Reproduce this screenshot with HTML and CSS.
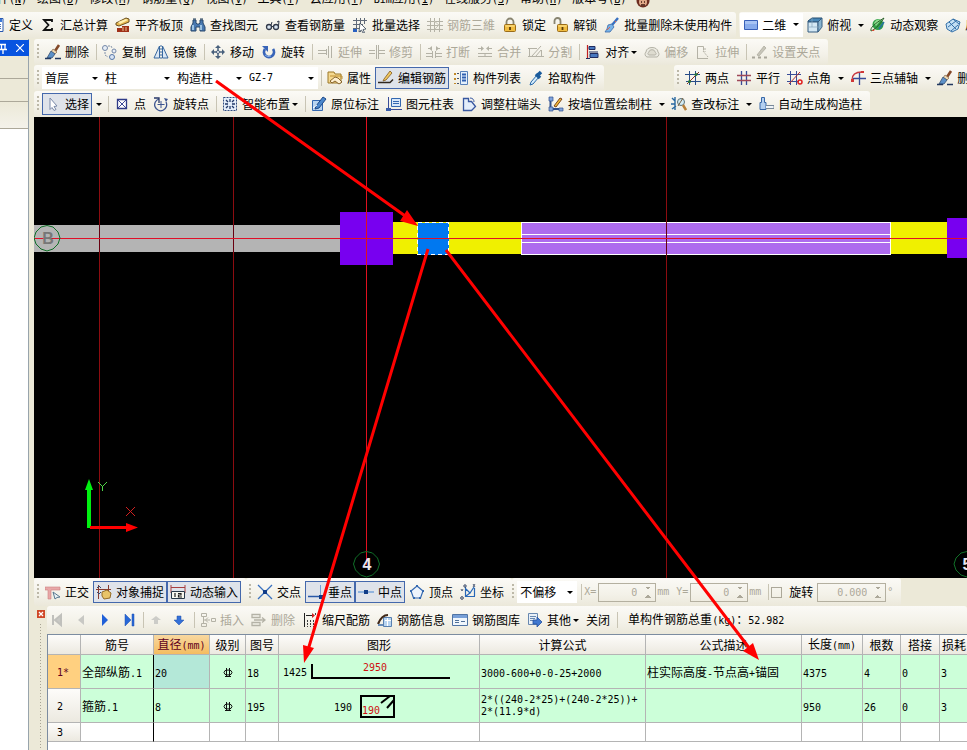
FILE: index.html
```html
<!DOCTYPE html>
<html lang="zh-CN">
<head>
<meta charset="utf-8">
<title>钢筋</title>
<link rel="stylesheet" href="styles.css">
</head>
<body>
<svg class="defs" aria-hidden="true">
<defs>
<symbol id="define" viewBox="0 0 16 16"><path d="M1 1.500h13v13H1z" fill="#fff" stroke="#2858b0"/><path d="M2 2h11v3H2z" fill="#3c78d8"/><path d="M4 7.500h8M4 9.500h8M4 11.500h8" stroke="#4870b8"/></symbol>
<symbol id="sigma" viewBox="0 0 16 16"><path d="M12 5V3H4l4.500 5L4 13h8v-2" fill="none" stroke="#111" stroke-width="1.800"/></symbol>
<symbol id="slab" viewBox="0 0 16 16"><path d="M1 6l10-5 3 1v3L4 9 1 8z" fill="#e8b850" stroke="#6a5020"/><path d="M3 5l8-3 2 1-8 4z" fill="#fff0b0"/><path d="M2 11h5v4H2zM7 9h7v6H7z" fill="#a03018"/><path d="M8 10v4M11 10v4" stroke="#e8c090"/></symbol>
<symbol id="binoc" viewBox="0 0 16 16"><path d="M3 3h3v3l1 1h2l1-1V3h3v3l2 4v4h-5v-4H6v4H1v-4l2-4z" fill="#4878b0" stroke="#28486c"/><path d="M3 8v5M11 8v5" stroke="#b8dcf4" stroke-width="1.500"/><path d="M3 2h3M10 2h3" stroke="#1c3854"/></symbol>
<symbol id="glasses" viewBox="0 0 16 16"><circle cx="4" cy="10" r="2.500" fill="#d8e4f0" stroke="#303848" stroke-width="1.300"/><circle cx="11" cy="10" r="2.500" fill="#d8e4f0" stroke="#303848" stroke-width="1.300"/><path d="M6.500 9.500h2M13.500 9L14 4l-2 1M6 8l1-3" fill="none" stroke="#303848"/></symbol>
<symbol id="batch" viewBox="0 0 16 16"><path d="M4.500 1v14M8.500 1v14M12.500 1v6M1 3.500h14M1 7.500h10M1 11.500h8" stroke="#606a78"/><path d="M8 6l6 6-3 .500 1.500 3-1.500.500-1.500-3L7 15z" fill="#fff" stroke="#384858" stroke-width=".8"/><path d="M1 12h4v3H1z" fill="#2860c0"/></symbol>
<symbol id="grid3" viewBox="0 0 16 16"><path d="M3.500 1v14M7.500 1v14M12.500 1v14M0 4.500h16M0 8.500h16M0 12.500h16" stroke="#b4b2a6"/><path d="M7 4l5 4-4 4" fill="none" stroke="#c8c6ba"/></symbol>
<symbol id="lock" viewBox="0 0 16 16"><path d="M4.500 8V5a3.500 3.500 0 017 0v3" fill="none" stroke="#888470" stroke-width="1.800"/><rect x="2.500" y="7.500" width="11" height="7" rx="1" fill="#f0bc40" stroke="#9a6c18"/><path d="M3.500 9h9" stroke="#ffe898"/><path d="M8 10v3" stroke="#5a3c08" stroke-width="1.800"/></symbol>
<symbol id="unlock" viewBox="0 0 16 16"><path d="M1.500 7V4a3 3 0 016 0v4" fill="none" stroke="#888470" stroke-width="1.800"/><rect x="4.500" y="7.500" width="10" height="7" rx="1" fill="#f0bc40" stroke="#9a6c18"/><path d="M5.500 9h8" stroke="#ffe898"/><path d="M9.500 10v3" stroke="#5a3c08" stroke-width="1.800"/></symbol>
<symbol id="brushb" viewBox="0 0 16 16"><path d="M14 1l-6 7" stroke="#3870c0" stroke-width="2.400"/><path d="M4 8l4-1 2 3-4 5H1l2-3z" fill="#78b4e8" stroke="#3868a8" stroke-width=".8"/><path d="M3 13l3-3M11 4l1 1" stroke="#e86048"/></symbol>
<symbol id="brush" viewBox="0 0 16 16"><path d="M14 1l-4 6" stroke="#844828" stroke-width="2.600"/><path d="M8 5l4 3-2 2-4-2z" fill="#f0d8b0" stroke="#806850" stroke-width=".7"/><path d="M6 7l4 3-3 4H2z" fill="#5c90c8" stroke="#385070" stroke-width=".8"/><path d="M0 14.500h6M10 14.500h6" stroke="#223860" stroke-width="1.300"/></symbol>
<symbol id="rect2d" viewBox="0 0 16 16"><path d="M1.500 3.500h13v9h-13z" fill="#88acec" stroke="#3860b8"/><path d="M2 4h12v3H2z" fill="#a8c4f4"/></symbol>
<symbol id="cube" viewBox="0 0 16 16"><path d="M1 4l4-3h10l-4 4H1z" fill="#4888b8" stroke="#244c70"/><path d="M1 5h10v10H1z" fill="#d4e8f4" stroke="#345c80"/><path d="M11 5l4-4v9l-4 5z" fill="#88b4d0" stroke="#345c80"/><path d="M5 1v9H1M5 10h10" fill="none" stroke="#88a8bc" stroke-width=".7"/></symbol>
<symbol id="orbit" viewBox="0 0 16 16"><circle cx="8" cy="7.500" r="5.500" fill="#30a048"/><path d="M4 6c2-4 5-4 7-3L6 9z" fill="#90dc90"/><path d="M1 14c-1-3 3-7 13-13-3 5-8 11-13 13z" fill="none" stroke="#286028"/><path d="M1 14l4-2-1 2z" fill="#e04830"/><path d="M9 12l5-7" stroke="#2870a0" stroke-width="1.500"/></symbol>
<symbol id="globe" viewBox="0 0 16 16"><path d="M1 7l7-5 7 3-2 7-6 3-5-3z" fill="#c4e0f4" stroke="#3470a8"/><path d="M3 10l8-6M6 14l7-6M4 5l7 7M8 2l6 5" stroke="#3470a8"/></symbol>
<symbol id="copy" viewBox="0 0 16 16"><circle cx="3" cy="4" r="2.500" fill="#e8eef6" stroke="#7488a8"/><circle cx="12" cy="7" r="2" fill="#e8eef6" stroke="#7488a8"/><circle cx="10" cy="13" r="2.500" fill="#d8e4f4" stroke="#5878a8"/><path d="M6 2h3l1 2M3 8v3l3 2" fill="none" stroke="#8090a8" stroke-dasharray="2 1"/></symbol>
<symbol id="mirror" viewBox="0 0 16 16"><path d="M6.500 2v12H1zM9.500 2v12H15z" fill="#dce8f4" stroke="#3868a0"/><path d="M8 1v14" stroke="#3868a0" stroke-dasharray="2 1"/></symbol>
<symbol id="move" viewBox="0 0 16 16"><path d="M8 2v12M2 8h12" stroke="#48607c" stroke-width="1.500"/><path d="M5 4l3-3 3 3zM5 12l3 3 3-3zM4 5L1 8l3 3zM12 5l3 3-3 3z" fill="#48607c"/><circle cx="8" cy="8" r="1.500" fill="#fff" stroke="#48607c"/></symbol>
<symbol id="rotate" viewBox="0 0 16 16"><path d="M4 5a5 5 0 108 0" fill="none" stroke="#3864b8" stroke-width="2.800"/><path d="M1 2h6v6z" fill="#3864b8"/><path d="M4 11a5 5 0 006 1" fill="none" stroke="#88b0e8"/></symbol>
<symbol id="extend" viewBox="0 0 16 16"><path d="M0 6.500h8M0 9.500h8M10.500 2v12M13.500 2v12M8.500 5v6" stroke="#b4b2a6"/></symbol>
<symbol id="trim" viewBox="0 0 16 16"><path d="M0 6.500h6M0 9.500h6M10 6.500h6M10 9.500h6M7.500 1v14M9.500 1v14" stroke="#b4b2a6"/></symbol>
<symbol id="break" viewBox="0 0 16 16"><path d="M0 9.500h6M0 12.500h6M10 9.500h6M10 12.500h6M6.500 7v7M9.500 7v7M2 4.500h4M10 4.500h4" stroke="#b4b2a6"/><path d="M6 2l-3 2.500L6 7zM10 2l3 2.500L10 7z" fill="#b4b2a6"/></symbol>
<symbol id="merge" viewBox="0 0 16 16"><path d="M1 9.500h14M1 12.500h14M8 9v4M1 4.500h5M10 4.500h5" stroke="#b4b2a6"/><path d="M4 2l3 2.500L4 7zM12 2L9 4.500 12 7z" fill="#b4b2a6"/></symbol>
<symbol id="cut" viewBox="0 0 16 16"><path d="M0 4.500h9M0 12.500h16M1.500 4v8M13.500 6v7M4 12l9-10M8 12l5-6" stroke="#b4b2a6" fill="none"/></symbol>
<symbol id="align" viewBox="0 0 16 16"><path d="M2.500 1v14" stroke="#c02020" stroke-width="1.200"/><path d="M4 2.500h6v3H4zM4 8h9M5 9.500h8v4H5z" fill="#4878c0" stroke="#202c60"/><path d="M1 14.500h4" stroke="#202c60"/></symbol>
<symbol id="offset" viewBox="0 0 16 16"><path d="M3 13a3 3 0 01-1-5c0-6 12-6 12 0a3 3 0 01-1 5z" fill="#ecebe2" stroke="#b4b2a6"/><path d="M5 11c-2-1-1-2 0-3 0-3 6-3 6 0 1 1 2 2 0 3z" fill="#dedcd0" stroke="#b4b2a6"/></symbol>
<symbol id="stretch" viewBox="0 0 16 16"><path d="M2.500 14.500V2.500h6v4M2 14.500h11" fill="none" stroke="#b4b2a6"/><path d="M8 7l5 6M10 4v4" stroke="#b4b2a6" stroke-dasharray="2 1"/></symbol>
<symbol id="grip" viewBox="0 0 16 16"><path d="M5 11l7-9 2 2-7 8z" fill="#c8c6ba" stroke="#a8a69a" stroke-width=".7"/><path d="M0 13.500h3M6 13.500h3M12 13.500h3" stroke="#a8a69a" stroke-width="2"/></symbol>
<symbol id="props" viewBox="0 0 16 16"><path d="M1 2h6l1 2h6v9H1z" fill="#f4d890" stroke="#9c7828"/><path d="M3 6h12v3" fill="none" stroke="#c09030"/><path d="M3 11l5-4 3 1 4 4-3 2-4-3-3 2z" fill="#fff0d0" stroke="#7c5820" stroke-width=".9"/></symbol>
<symbol id="editbar" viewBox="0 0 16 16"><path d="M6 9l6-8 2 2-6 7-3 1z" fill="#f0c860" stroke="#805820" stroke-width=".8"/><path d="M0 12.500h12l3-3" stroke="#302820" stroke-width="1.500" fill="none"/></symbol>
<symbol id="list" viewBox="0 0 16 16"><path d="M1 3h2v2H1zM1 8h2v2H1zM1 13h2v1H1z" fill="#c08828"/><path d="M4 3.500h2M4 8.500h2M4 13.500h2" stroke="#405070"/><path d="M7.500 1.500h7v13h-7z" fill="#e4f0fc" stroke="#5880b8"/><path d="M9 4.500h4M9 7.500h4M9 10.500h4" stroke="#3060b0" stroke-width="2"/></symbol>
<symbol id="pick" viewBox="0 0 16 16"><path d="M3 12l6-7 2 2-6 7-3 1z" fill="#d4ecfc" stroke="#2868a8"/><path d="M8 4l4 4M10 5l3-3" stroke="#1c5c9c" stroke-width="3.500"/></symbol>
<symbol id="twopt" viewBox="0 0 16 16"><path d="M4.500 1v14M10.500 1v14M0 4.500h15M1 11.500h15" stroke="#284c88"/><path d="M2 14L14 2" stroke="#883020"/><circle cx="4.500" cy="11.500" r="1.500" fill="#287838"/><circle cx="11" cy="4.500" r="1.500" fill="#287838"/></symbol>
<symbol id="parallel" viewBox="0 0 16 16"><path d="M5.500 1v14M10.500 1v14" stroke="#384c98" stroke-width="1.300"/><path d="M1 5.500h14M1 10.500h14" stroke="#a04858" stroke-width="1.300"/></symbol>
<symbol id="ptangle" viewBox="0 0 16 16"><path d="M3.500 1v14M9.500 1v14M0 4.500h14M0 11.500h12" stroke="#384c98"/><path d="M2 14L13 2" stroke="#b03030"/><circle cx="13" cy="12" r="2" fill="none" stroke="#e02020" stroke-width="1.500"/></symbol>
<symbol id="threept" viewBox="0 0 16 16"><path d="M2 10c0-5 3-8 10-8" fill="none" stroke="#c83840" stroke-width="1.300"/><path d="M9.500 3v12M3 8.500h13" stroke="#384c98" stroke-width="1.300"/><path d="M1 9h3v3H1zM11 1h3v2h-3z" fill="#d03838"/></symbol>
<symbol id="cursor" viewBox="0 0 16 16"><path d="M5 2l7 8-3 .500 2 3-2 1-2-3-2 2z" fill="#fff" stroke="#7888a8"/></symbol>
<symbol id="pt" viewBox="0 0 16 16"><path d="M3.500 3.500h9v9h-9z" fill="#fff" stroke="#303c88" stroke-width="1.300"/><path d="M4 4l8 8M12 4l-8 8" stroke="#404c98"/></symbol>
<symbol id="rotpt" viewBox="0 0 16 16"><path d="M6 3a6 6 0 107 3" fill="none" stroke="#3c5490" stroke-width="1.300"/><path d="M8 5v7M4.500 8.500h7" stroke="#3c5490"/><path d="M1 2h5v5" fill="none" stroke="#283868" stroke-width="1.300"/><path d="M11 2l4 1-2 3z" fill="#3c5490"/></symbol>
<symbol id="smart" viewBox="0 0 16 16"><path d="M1.500 1.500h13v13h-13z" fill="#e4eefa" stroke="#304c80" stroke-dasharray="2 1"/><path d="M8 3v3M8 10v3M3 8h3M10 8h3M4 4l2 2M12 4l-2 2M4 12l2-2M12 12l-2-2" stroke="#203868" stroke-width="1.300"/></symbol>
<symbol id="annot" viewBox="0 0 16 16"><path d="M1.500 4.500h10v10h-10z" fill="#b8d4f0" stroke="#3468b0"/><path d="M5 10l7-9 3 2-7 9-4 1z" fill="#4c88cc" stroke="#1c4888"/><path d="M2 12l4-3" stroke="#fff"/></symbol>
<symbol id="coltable" viewBox="0 0 16 16"><path d="M2.500 1v12M0 13.500h16" stroke="#384c98"/><path d="M5.500 2.500h9v8h-9z" fill="#d8e8fa" stroke="#3468b0"/><path d="M7 5.500h6M7 7.500h6" stroke="#3468b0"/><path d="M0 12h5v3H0z" fill="#385ca8"/></symbol>
<symbol id="adjust" viewBox="0 0 16 16"><path d="M2.500 14.500V2.500h5v3h3l4 5-4 4z" fill="#e4eefa" stroke="#3858a0" stroke-width="1.300"/><path d="M9 2c3 0 4 2 4 4" fill="none" stroke="#3858a0"/></symbol>
<symbol id="wall" viewBox="0 0 16 16"><path d="M2.500 2v11h12" fill="none" stroke="#30508c" stroke-width="2"/><path d="M1 1h4v4H1zM1 11h4v4H1zM11 12h4v3h-4z" fill="#80a4dc" stroke="#30508c" stroke-width=".7"/><path d="M6 10l6-8 2 1-6 8z" fill="#f4bc38" stroke="#7c4418"/></symbol>
<symbol id="check" viewBox="0 0 16 16"><path d="M1 2l3 3M4 1v13M1 13l4-3M4 8H0" fill="none" stroke="#2868a0" stroke-width="1.400"/><circle cx="10" cy="6" r="3.500" fill="#d4ecf4" stroke="#587078"/><path d="M12 9l3 5" stroke="#b88038" stroke-width="2.500"/><path d="M7 10l5-8" stroke="#786040"/></symbol>
<symbol id="auto" viewBox="0 0 16 16"><path d="M3.500 1.500h3v5h1.500v7H2v-7h1.500z" fill="#b4d0f0" stroke="#3868a8"/><path d="M8 9.500h8v3H8" fill="#f0f4f8" stroke="#788898"/></symbol>
<symbol id="ortho" viewBox="0 0 16 16"><path d="M0 3h15v3H6v9H3V6H0z" fill="#e8a8a8" stroke="#cc8080" stroke-width=".6"/><path d="M8 8l7 5-3 .500L10 15z" fill="#e8f0f4" stroke="#587890"/></symbol>
<symbol id="snap" viewBox="0 0 16 16"><path d="M2.500 1v14M0 5.500h15M12.500 1v9" stroke="#883c30"/><path d="M1 4l2-2 2 2M1 8l2 2 2-2" fill="none" stroke="#3c4c70"/><path d="M6 8l5-2 4 3-1 5-6 1-2-3z" fill="#e8c468" stroke="#946c28"/></symbol>
<symbol id="dyn" viewBox="0 0 16 16"><path d="M1 1v8M15 1v8M1 3.500h14" stroke="#a84040"/><path d="M1.500 7.500h13v7h-13z" fill="#f8f8f0" stroke="#283848"/><path d="M5 9v4M8 9.500h3v1.500H8.500v2H12" fill="none" stroke="#202020" stroke-width="1.200"/></symbol>
<symbol id="cross" viewBox="0 0 16 16"><path d="M1 1l14 14M15 1L1 15" stroke="#3870c0" stroke-width="1.300"/><path d="M6 6h4v4H6z" fill="#103c88"/></symbol>
<symbol id="perp" viewBox="0 0 16 16"><path d="M0 12.500h16" stroke="#2858a8" stroke-width="1.500"/><path d="M12.500 1v11" stroke="#70a0d8"/><path d="M11 11h4v4h-4z" fill="#103c88"/></symbol>
<symbol id="mid" viewBox="0 0 16 16"><path d="M0 8h16" stroke="#70a0d8" stroke-width="1.400"/><path d="M6 6h4v4H6z" fill="#103c88"/></symbol>
<symbol id="vertex" viewBox="0 0 16 16"><path d="M8 2l6 5-2.500 7h-7L2 7z" fill="#eef4fc" stroke="#3468b0" stroke-width="1.200"/><path d="M7 1h2v2H7zM1 6h2v2H1zM13 6h2v2h-2zM4 13h2v2H4zM10 13h2v2h-2z" fill="#3468b0"/></symbol>
<symbol id="coord" viewBox="0 0 16 16"><path d="M5.500 3v9.500H15M6 5l4 4 4-6M14.500 4v8M6 12l4-3" fill="none" stroke="#2868b8" stroke-width="1.200"/><circle cx="5" cy="2" r="1.200" fill="none" stroke="#304060"/><circle cx="2" cy="14" r="1.300" fill="none" stroke="#304060"/><path d="M1 5l1 2 1-2M13 0l2 3M15 0l-2 3" stroke="#304060" fill="none" stroke-width=".8"/></symbol>
<symbol id="first" viewBox="0 0 16 16"><path d="M4 3v10M12 3L6 8l6 5z" fill="#c8c8c4" stroke="#c0c0bc" stroke-width="2"/></symbol>
<symbol id="prev" viewBox="0 0 16 16"><path d="M11 3L5 8l6 5z" fill="#c8c8c4"/></symbol>
<symbol id="next" viewBox="0 0 16 16"><path d="M5 2l6 6-6 6z" fill="#2060d8"/></symbol>
<symbol id="last" viewBox="0 0 16 16"><path d="M4 2l6 6-6 6zM11 2h2v12h-2z" fill="#2868d8" stroke="#1c50b0" stroke-width=".5"/></symbol>
<symbol id="up" viewBox="0 0 16 16"><path d="M8 4l5 4h-3v4H6V8H3z" fill="#ccccc8"/></symbol>
<symbol id="down" viewBox="0 0 16 16"><path d="M8 13l5-5h-3V4H6v4H3z" fill="#3470d8" stroke="#2050a8" stroke-width=".5"/></symbol>
<symbol id="insert" viewBox="0 0 16 16"><path d="M1.500 1.500h5v3h-5zM1.500 11.500h5v3h-5zM11.500 6.500h4v3h-4zM3.500 5v6M4 8h6M8 5.500L5.500 8 8 10.500" fill="none" stroke="#b4b2a6"/></symbol>
<symbol id="remove" viewBox="0 0 16 16"><path d="M1 2.500h8v3H1zM1 10.500h8v3H1zM3 8h11M11 5.500L14 8l-3 2.500" fill="none" stroke="#b4b2a6" stroke-width="1.300"/></symbol>
<symbol id="scale" viewBox="0 0 16 16"><path d="M2.500 1v14M4 3.500h8" stroke="#202020"/><path d="M10 1l3 2.500L10 6z" fill="#c82020"/><path d="M5.500 8v7M8.500 8v7M11.500 8v7M13.500 1v3" stroke="#404040" stroke-dasharray="2 1"/></symbol>
<symbol id="info" viewBox="0 0 16 16"><path d="M6.500 5.500h8v9h-8z" fill="#b8d4f0" stroke="#5880b0"/><path d="M1 12c2-5 5-9 10-9" fill="none" stroke="#402818" stroke-width="2.200"/><path d="M8 8.500h6M10.500 6v8" stroke="#fff"/><path d="M1 13h5" stroke="#688cb8" stroke-width="2"/></symbol>
<symbol id="lib" viewBox="0 0 16 16"><path d="M.5 2.500h15v11H.5z" fill="#f0f6fc" stroke="#5074a4"/><path d="M1 3h14v3H1z" fill="#78a0d8"/><path d="M3 8.500h4M3 10.500h4M9 9.500h4" stroke="#507098"/></symbol>
<symbol id="other" viewBox="0 0 16 16"><path d="M1.500 1.500h9v11h-9z" fill="#e8f0f8" stroke="#6888b0"/><path d="M3 4.500h6M3 6.500h5M3 8.500h3" stroke="#6888b0"/><path d="M6 8h4V5l5 5-5 5v-3H6z" fill="#4078d0" stroke="#2450a0" stroke-width=".8"/></symbol>
<symbol id="grade" viewBox="0 0 10 10"><ellipse cx="5" cy="4.500" rx="4" ry="2.500" fill="none" stroke="#111"/><path d="M3.500 0v9M6.500 0v9M2 8.500h6" stroke="#111" fill="none"/></symbol>
</defs>
</svg>

<div class="app">
<nav class="menu">
<a href="#">构件<i>(<u>N</u>)</i></a><a href="#">绘图<i>(<u>D</u>)</i></a><a href="#">修改<i>(<u>M</u>)</i></a><a href="#">钢筋量<i>(<u>Q</u>)</i></a><a href="#">视图<i>(<u>V</u>)</i></a><a href="#">工具<i>(<u>T</u>)</i></a><a href="#">云应用<i>(<u>Y</u>)</i></a><a href="#"><i>Bim</i>应用<i>(<u>I</u>)</i></a><a href="#">在线服务<i>(<u>S</u>)</i></a><a href="#">帮助<i>(<u>H</u>)</i></a><a href="#">版本号<i>(<u>B</u>)</i></a>
<svg width="14" height="14" viewBox="0 0 14 14"><circle cx="7" cy="7" r="6.500" fill="#6c2c20"/><circle cx="7" cy="8" r="4" fill="#e0a888"/><path d="M5 8h1M8 8h1M5 11h4" stroke="#401810" stroke-width="1.500"/></svg>
</nav>
<div class="row top">
<div class="bar cut">
<button><svg><use href="#define"/></svg>定义</button><button><svg><use href="#sigma"/></svg>汇总计算</button><button><svg><use href="#slab"/></svg>平齐板顶</button><button><svg><use href="#binoc"/></svg>查找图元</button><button><svg><use href="#glasses"/></svg>查看钢筋量</button><button><svg><use href="#batch"/></svg>批量选择</button><button disabled><svg><use href="#grid3"/></svg>钢筋三維</button><button><svg><use href="#lock"/></svg>锁定</button><button><svg><use href="#unlock"/></svg>解锁</button><button><svg><use href="#brushb"/></svg>批量删除未使用构件</button>
</div>
<div class="bar view">
<div class="combo dim"><svg><use href="#rect2d"/></svg><select aria-label="视图维度"><option>二维</option></select></div>
<button><svg><use href="#cube"/></svg>俯视</button><button class="arrow" aria-label="俯视选项"></button><button><svg><use href="#orbit"/></svg>动态观察</button><button><svg><use href="#globe"/></svg>局部三维</button>
</div>
</div>
<div class="main">
<aside class="dock">
<div class="dock-title"><svg width="9" height="12" viewBox="0 0 9 12"><path d="M0 2.500h6M1.500 2v5M5 2v5M0 7.500h7M3 8v4" stroke="#fff" stroke-width="1.300" fill="none"/></svg><svg width="8" height="8" viewBox="0 0 8 8"><path d="M0 0l8 8M8 0L0 8" stroke="#fff" stroke-width="1.200"/></svg></div>
<div class="dock-tab"></div><div class="dock-tab"></div><div class="dock-head"></div>
<div class="dock-body"></div>
</aside>
<div class="work">
<div class="row">
<div class="bar"><span class="grip"></span>
<button><svg><use href="#brush"/></svg>删除</button><span class="sep"></span><button><svg><use href="#copy"/></svg>复制</button><button><svg><use href="#mirror"/></svg>镜像</button><span class="sep"></span><button><svg><use href="#move"/></svg>移动</button><button><svg><use href="#rotate"/></svg>旋转</button><span class="sep"></span><button disabled><svg><use href="#extend"/></svg>延伸</button><button disabled><svg><use href="#trim"/></svg>修剪</button><span class="sep"></span><button disabled><svg><use href="#break"/></svg>打断</button><button disabled><svg><use href="#merge"/></svg>合并</button><button disabled><svg><use href="#cut"/></svg>分割</button><span class="sep"></span><button class="drop"><svg><use href="#align"/></svg>对齐</button><button disabled><svg><use href="#offset"/></svg>偏移</button><button disabled><svg><use href="#stretch"/></svg>拉伸</button><span class="sep"></span><button disabled><svg><use href="#grip"/></svg>设置夹点</button>
</div>
</div>
<div class="row">
<div class="bar"><span class="grip"></span>
<div class="combo narrow"><select aria-label="楼层"><option>首层</option></select></div><div class="combo"><select aria-label="构件类别"><option>柱</option></select></div><div class="combo"><select aria-label="构件类型"><option>构造柱</option></select></div><div class="combo"><select class="latin" aria-label="构件"><option>GZ-7</option></select></div>
<span class="sep"></span><button><svg><use href="#props"/></svg>属性</button><button class="on"><svg><use href="#editbar"/></svg>编辑钢筋</button><button><svg><use href="#list"/></svg>构件列表</button><button><svg><use href="#pick"/></svg>拾取构件</button>
</div>
<div class="bar axis"><span class="grip"></span>
<button><svg><use href="#twopt"/></svg>两点</button><button><svg><use href="#parallel"/></svg>平行</button><button><svg><use href="#ptangle"/></svg>点角</button><button class="arrow" aria-label="点角选项"></button><button><svg><use href="#threept"/></svg>三点辅轴</button><button class="arrow" aria-label="三点辅轴选项"></button><button><svg><use href="#brush"/></svg>删除辅轴</button>
</div>
</div>
<div class="row">
<div class="bar"><span class="grip"></span>
<button class="on"><svg><use href="#cursor"/></svg>选择</button><button class="arrow" aria-label="选择选项"></button><span class="sep"></span><button><svg><use href="#pt"/></svg>点</button><button><svg><use href="#rotpt"/></svg>旋转点</button><span class="sep"></span><button class="drop"><svg><use href="#smart"/></svg>智能布置</button><span class="sep"></span><button><svg><use href="#annot"/></svg>原位标注</button><button><svg><use href="#coltable"/></svg>图元柱表</button><button><svg><use href="#adjust"/></svg>调整柱端头</button><button><svg><use href="#wall"/></svg>按墙位置绘制柱</button><button class="arrow" aria-label="绘制柱选项"></button><button><svg><use href="#check"/></svg>查改标注</button><button class="arrow" aria-label="查改标注选项"></button><button><svg><use href="#auto"/></svg>自动生成构造柱</button>
</div>
</div>
<div class="canvas">
<svg width="100%" height="100%" shape-rendering="crispEdges">
<g transform="translate(-34 -117)">
<path d="M99.500 117v461M233.500 117v461M666.500 117v461" stroke="#8c0c10"/>
<path d="M34 225h306v27H34z" fill="#b4b4b4"/>
<path d="M99.500 225v27M233.500 225v27" stroke="#680010"/>
<path d="M393 222h554v32H393z" fill="#f0f000"/>
<path d="M340 212h53v53h-53zM947 218h53v40h-53z" fill="#7800f0"/>
<path d="M521.500 222.500h369v32h-369z" fill="#ad6bee" stroke="#fff"/>
<path d="M522 234.500h368M522 242.500h368" stroke="#fff"/>
<path d="M417.500 222.500h31v32h-31z" fill="#0078f0" stroke="#fff" stroke-dasharray="4 3"/>
<path d="M666.500 222v33" stroke="#680010"/>
<path d="M34 238.500h966" stroke="#e01028"/>
<path d="M366.500 117v448" stroke="#e01020"/>
<g fill="none" stroke="#107028" shape-rendering="auto"><path id="bubble" d="M47 225.500l6 1.500 5 5 2 6-2 6-5 5-6 2-6-2-5-5-2-6 2-6 5-5z"/><use href="#bubble" x="319.500" y="326"/><use href="#bubble" x="920" y="326"/></g>
<g class="mark" text-anchor="middle"><text x="48" y="244" fill="#777">B</text><text x="367" y="570" fill="#e8e8f0">4</text><text x="967" y="570" fill="#e8e8f0">5</text></g>
<g shape-rendering="auto"><path d="M87 528v-38h-2l4-11 4 11h-2v38z" fill="#00f010"/><path d="M90 526h36v-3l12 4.500-12 4.500v-3H90z" fill="#f00"/><path d="M98 482l4.500 4.500L107 482M102.500 486v5" fill="none" stroke="#50d848"/><path d="M126 507l9 9M135 507l-9 9" stroke="#d02020"/></g>
</g>
</svg>
</div>
<div class="row snap">
<div class="bar"><span class="grip"></span><button><svg><use href="#ortho"/></svg>正交</button><button class="on join"><svg><use href="#snap"/></svg>对象捕捉</button><button class="on"><svg><use href="#dyn"/></svg>动态输入</button></div>
<div class="bar"><span class="grip"></span><button><svg><use href="#cross"/></svg>交点</button><button class="on join"><svg><use href="#perp"/></svg>垂点</button><button class="on"><svg><use href="#mid"/></svg>中点</button><button><svg><use href="#vertex"/></svg>顶点</button><button><svg><use href="#coord"/></svg>坐标</button></div>
<div class="bar offsets"><span class="grip"></span><div class="combo narrow"><select aria-label="偏移方式"><option>不偏移</option></select></div><span class="sep"></span>
<label class="field">X=<input type="text" value="0" disabled></label><span class="unit">mm</span><label class="field">Y=<input type="text" value="0" disabled></label><span class="unit">mm</span><span class="sep"></span><label class="tick"><input type="checkbox">旋转</label><label class="field angle"><input type="text" value="0.000" aria-label="旋转角度" disabled></label><span class="unit">°</span></div>
</div>
<section class="rebar">
<div class="handle"><button class="close" aria-label="关闭面板"><svg viewBox="0 0 8 8"><path d="M2 2l4 4M6 2L2 6" stroke="#fff" stroke-width="1.300"/></svg></button><span class="dots"></span></div>
<div class="pane">
<div class="bar wide">
<button class="nav" disabled aria-label="首条"><svg><use href="#first"/></svg></button><button class="nav" disabled aria-label="上一条"><svg><use href="#prev"/></svg></button><button class="nav" aria-label="下一条"><svg><use href="#next"/></svg></button><button class="nav" aria-label="末条"><svg><use href="#last"/></svg></button><span class="sep tight"></span><button disabled aria-label="上移"><svg><use href="#up"/></svg></button><button aria-label="下移"><svg><use href="#down"/></svg></button><span class="sep"></span><button disabled><svg><use href="#insert"/></svg>插入</button><button disabled><svg><use href="#remove"/></svg>删除</button><button><svg><use href="#scale"/></svg>缩尺配筋</button><button><svg><use href="#info"/></svg>钢筋信息</button><button><svg><use href="#lib"/></svg>钢筋图库</button><button class="drop"><svg><use href="#other"/></svg>其他</button><button>关闭</button><span class="sep"></span><span class="total">单构件钢筋总重<i>(kg)</i>：<i>52.982</i></span>
</div>
<div class="sheet">
<table>
<colgroup><col class="c-no"><col class="c-name"><col class="c-dia"><col class="c-grade"><col class="c-fig"><col class="c-shape"><col class="c-formula"><col class="c-desc"><col class="c-len"><col class="c-count"><col class="c-lap"><col class="c-loss"></colgroup>
<thead><tr><th></th><th class="frozen">筋号</th><th class="active">直径<i>(mm)</i></th><th>级别</th><th>图号</th><th>图形</th><th>计算公式</th><th>公式描述</th><th>长度<i>(mm)</i></th><th>根数</th><th>搭接</th><th>损耗</th></tr></thead>
<tbody>
<tr><th class="active"><i>1*</i></th><td class="frozen">全部纵筋<i>.1</i></td><td class="current"><i>20</i></td><td class="mid"><svg class="grade"><use href="#grade"/></svg></td><td><i>18</i></td><td class="shape"><svg width="200" height="33"><path d="M33 9v14h138" fill="none" stroke="#000" stroke-width="2"/><text x="4" y="21">1425</text><text class="red" x="84" y="16">2950</text></svg></td><td><i>3000-600+0-0-25+2000</i></td><td>柱实际高度<i>-</i>节点高<i>+</i>锚固</td><td><i>4375</i></td><td><i>4</i></td><td><i>0</i></td><td><i>3</i></td></tr>
<tr><th><i>2</i></th><td class="frozen">箍筋<i>.1</i></td><td><i>8</i></td><td class="mid"><svg class="grade"><use href="#grade"/></svg></td><td><i>195</i></td><td class="shape"><svg width="200" height="33"><path d="M82 7h33v21H82zM102 14l9-7M108 19l7-8" fill="none" stroke="#000" stroke-width="2"/><text x="55" y="22">190</text><text class="red" x="83" y="25">190</text></svg></td><td><i>2*((240-2*25)+(240-2*25))+<br>2*(11.9*d)</i></td><td></td><td><i>950</i></td><td><i>26</i></td><td><i>0</i></td><td><i>3</i></td></tr>
<tr class="blank"><th><i>3</i></th><td class="frozen"></td><td></td><td></td><td></td><td></td><td></td><td></td><td></td><td></td><td></td><td></td></tr>
</tbody>
</table>
</div>
</div>
</section>
</div>
</div>
<svg class="callouts" aria-hidden="true"><g stroke="#f00" stroke-width="3"><path d="M216 81L408 218M428 249L308 650M446 250L750 649"/></g><path d="M418 226l-18-5 7-11zM304 663l-1-18 11 3zM759 660l-16-9 10-8z" fill="#f00"/></svg>
</div>
</body>
</html>
```

FILE: styles.css
```css
* { box-sizing: border-box; }

body {
  margin: 0;
  background: #ece9d8;
  color: #000;
  font: 12px/16px "Noto Sans CJK SC", "Liberation Sans", sans-serif;
}

button, select, input { font: inherit; color: inherit; border: 0; margin: 0; padding: 0; background: none; border-radius: 0; }

i, .latin, .unit, .field, .shape text {
  font-family: "DejaVu Sans Mono", monospace;
  font-size: 10px;
  font-style: normal;
}

.defs { position: absolute; width: 0; height: 0; }

.app {
  position: relative;
  display: flex;
  flex-direction: column;
  height: 100vh;
  overflow: hidden;
}

.callouts { position: absolute; inset: 0; width: 100%; height: 100%; pointer-events: none; }

/* menu */
.menu {
  display: flex;
  align-items: flex-end;
  gap: 10px;
  height: 12px;
  flex: none;
  padding-bottom: 4px;
  margin-left: -15px;
  white-space: nowrap;
}
.menu a { color: inherit; text-decoration: none; }

/* tool bars */
.row { display: flex; flex: none; height: 26px; overflow: hidden; }
.top { margin-bottom: 1px; }

.bar {
  display: flex;
  align-items: center;
  flex: none;
  padding: 0 4px 0 3px;
  border-radius: 3px;
  background: linear-gradient(#fbfaf6, #f3f1e8 60%, #ebe8da);
}
.cut { margin-left: -14px; padding: 0; }
.view { margin-left: 3px; padding-left: 1px; flex: 1 0 auto; }
.axis { margin-left: 70px; flex: 1 0 auto; }
.wide { height: 28px; padding-left: 0; }

.bar button {
  display: flex;
  align-items: center;
  gap: 4px;
  flex: none;
  height: 22px;
  padding: 0 3px;
  margin-right: 1px;
  white-space: nowrap;
}
.bar button svg, .combo svg { width: 16px; height: 16px; flex: none; }
.bar button:disabled { color: #aca899; }
.bar .on { background: #dfe3ea; box-shadow: inset 0 0 0 1px #4468ac; }
.bar .join { margin-right: 0; }
.bar .nav { padding: 0 4px 0 3px; margin-right: 1px; }
.bar .nav:first-child { padding-left: 2px; }

.bar .arrow { width: 11px; justify-content: center; padding: 0; }
.arrow::after, .drop::after, .combo::after {
  content: "";
  border: 3px solid transparent;
  border-top-color: #000;
  border-bottom: 0;
}
.drop::after { margin: 0 0 0 -2px; }

.grip {
  width: 2px;
  height: 16px;
  margin: 0 3px 0 0;
  background: repeating-linear-gradient(#bcb8a8 0 2px, transparent 2px 4px);
}
.sep { width: 1px; height: 16px; margin: 0 2px 0 3px; background: #c8c4b4; }
.tight { margin: 0 1px; }

.combo {
  position: relative;
  display: flex;
  align-items: center;
  width: 72px;
  height: 22px;
  background: #fff;
}
.combo select { appearance: none; width: 100%; height: 20px; padding-left: 3px; outline: 0; }
.combo::after { position: absolute; right: 4px; top: 10px; pointer-events: none; }
.narrow { width: 60px; }
.dim { width: 63px; height: 24px; padding-left: 3px; margin-right: 1px; }

/* docked panel on the left */
.main { display: flex; flex: 1; min-height: 0; }
.dock {
  display: flex;
  flex-direction: column;
  width: 29px;
  margin-right: 5px;
  border-right: 1px solid #98a4ac;
  flex: none;
}
.dock-title {
  display: flex;
  align-items: center;
  justify-content: space-between;
  height: 16px;
  margin: 1px -1px 0 0;
  padding: 0 5px 0 0;
  background: #0854e0;
}
.dock-tab { height: 23px; border-bottom: 1px solid #aca899; }
.dock-head { height: 27px; background: linear-gradient(#ece9d8, #f4f2ea); border-bottom: 1px solid #aca899; }
.dock-body { flex: 1; background: #fff; }

.work { display: flex; flex-direction: column; flex: 1; min-width: 0; }
.canvas { flex: 1; min-height: 0; background: #000; overflow: hidden; }
.canvas svg { display: block; }
.mark { font: bold 16px "Liberation Sans", sans-serif; }

/* snap bar */
.snap { height: 28px; }
.bar.offsets { padding-left: 0; }
.offsets .combo { margin-right: 1px; }
.field { display: flex; align-items: center; gap: 2px; color: #aca899; }
.field input {
  width: 58px;
  height: 19px;
  padding-right: 18px;
  border: 1px solid #b4b0a0;
  text-align: right;
  color: #aca899;
  background:
    conic-gradient(from 135deg at 50% 0, #aca899 90deg, transparent 0) right 4px top 11px / 6px 3px no-repeat,
    conic-gradient(from -45deg at 50% 100%, #aca899 90deg, transparent 0) right 4px top 3px / 6px 3px no-repeat;
}
.angle input { width: 69px; }
.unit { color: #aca899; margin: 0 4px 0 1px; }
.unit + .field { margin-left: 3px; }
.tick { display: flex; align-items: center; gap: 7px; margin: 0 4px 0 0; }
.tick input { appearance: none; width: 11px; height: 11px; border: 1px solid #aca899; }

/* reinforcement panel */
.rebar { display: flex; flex: none; }
.handle { display: flex; flex-direction: column; align-items: center; width: 13px; flex: none; padding-top: 4px; gap: 5px; }
.close { display: block; width: 8px; height: 8px; background: #d04828; }
.close svg { display: block; width: 8px; height: 8px; }
.dots { flex: 1; width: 3px; background: radial-gradient(circle, #a8a494 1px, transparent 1px) 0 0 / 3px 3px; }
.pane { flex: 1; min-width: 0; }
.total { padding-left: 8px; white-space: nowrap; }
.sheet { overflow: hidden; background: #fff; border: solid #7c8ca0; border-width: 1px 0 0 1px; padding-bottom: 8px; }

table { table-layout: fixed; width: 952px; min-width: 100%; border-collapse: separate; border-spacing: 0; }
.c-no { width: 33px; }
.c-name { width: 73px; }
.c-dia { width: 56px; }
.c-grade { width: 36px; }
.c-fig { width: 33px; }
.c-shape { width: 201px; }
.c-formula { width: 166px; }
.c-desc { width: 156px; }
.c-len { width: 61px; }
.c-count { width: 38px; }
.c-lap { width: 39px; }
.c-loss { width: 60px; }

th, td {
  height: 34px;
  padding: 0 0 0 1px;
  border: solid #b4b4b4;
  border-width: 0 1px 1px 0;
  text-align: left;
  font-weight: normal;
  white-space: nowrap;
}
td { background: #ccffd9; }
td i { line-height: 12px; display: inline-block; }
th { background: linear-gradient(#fdfcfa, #ece9e0); }
thead th { height: 20px; padding: 0; text-align: center; line-height: 16px; }
thead th:last-child { text-align: left; padding-left: 2px; }
tbody th { padding-left: 9px; }
th.active { background: #ffd080; color: #600020; }
thead th.active { background: linear-gradient(#f8d8a0, #f4bc60); }
.frozen { border-right-color: #000; }
thead .frozen { border-right-color: #b4b4b4; }
.current { background: #b4e8d8; }
.mid { text-align: center; }
.grade { width: 10px; height: 10px; vertical-align: middle; }
.shape { padding: 0; }
.shape svg { display: block; }
.red { fill: #d01010; }
.blank th, .blank td { height: 19px; line-height: 16px; }
.blank td { background: #fff; }
```
